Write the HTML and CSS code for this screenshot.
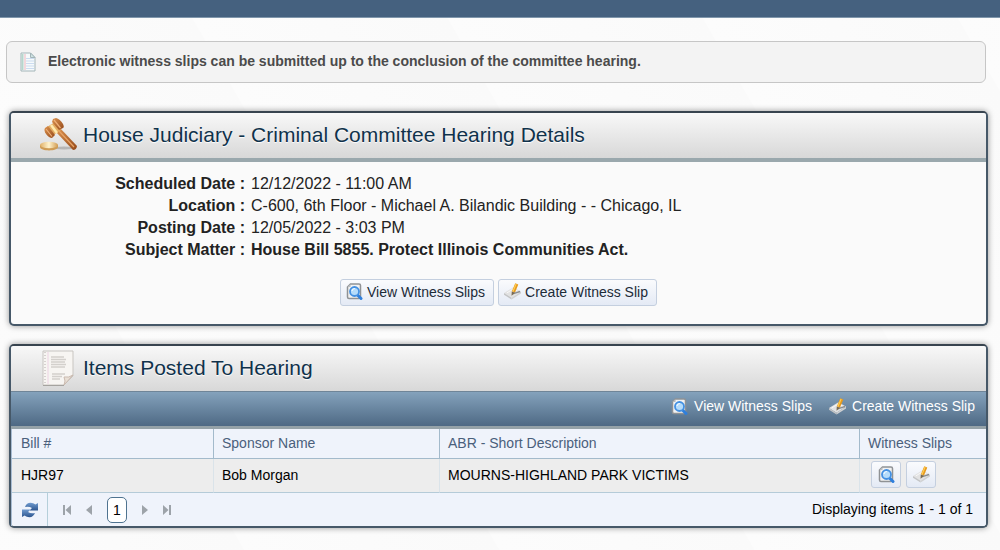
FILE: index.html
```html
<!DOCTYPE html>
<html lang="en">
  <head>
    <meta charset="UTF-8" />
    <meta name="viewport" content="width=device-width, initial-scale=1.0" />
    <title>Hearing Details</title>
    <link rel="stylesheet" href="styles.css">
  </head>
  <body>
    <!-- Shared icons -->
    <svg class="sprite" aria-hidden="true">
      <defs>
        <linearGradient id="wood" x1="0" y1="0" x2="1" y2="1">
          <stop offset="0" stop-color="#dd9450" />
          <stop offset="1" stop-color="#94491a" />
        </linearGradient>
        <linearGradient id="gold" x1="0" y1="0" x2="1" y2="0">
          <stop offset="0" stop-color="#e0b068" />
          <stop offset="0.5" stop-color="#fff3cc" />
          <stop offset="1" stop-color="#d09a50" />
        </linearGradient>
        <linearGradient id="arrow" x1="0" y1="0" x2="0" y2="1">
          <stop offset="0" stop-color="#6f9ace" />
          <stop offset="1" stop-color="#2c558f" />
        </linearGradient>
      </defs>
      <symbol id="icon-view" viewBox="0 0 16 17">
        <path d="M4 1h8.500q1.500 0 1.500 1.500V14q0 1.500-1.500 1.500H2.500Q1 15.500 1 14V4z" fill="#f2f2f2" stroke="#8f9295" stroke-width="1.500" />
        <path d="M1 4l3-3v3z" fill="#b9bcbf" />
        <path d="M11 12l3.500 3.500" stroke="#2f7fdc" stroke-width="3" stroke-linecap="round" />
        <circle cx="8" cy="8.500" r="4.500" fill="#b5dcfb" stroke="#4390e2" stroke-width="1.800" />
        <path d="M5.500 8q.5-2.500 3-2.500" fill="none" stroke="#eef8ff" stroke-width="1.200" />
      </symbol>
      <symbol id="icon-create" viewBox="0 0 18 17">
        <path d="M0 10L10 4l8 4.500L8 15z" fill="#e2e2e2" />
        <path d="M0 10l8 5v2l-8-5z" fill="#c3c4c5" />
        <path d="M8 15l10-6.500v2L8 17z" fill="#d0d1d2" />
        <path d="M3 10l7-4.300L15 8.500" fill="none" stroke="#f8f8f8" stroke-width="1" />
        <path d="M9 11l8-2.500" stroke="#8b8d8f" stroke-width="1.500" />
        <path d="M13.500.5L10 9" stroke="#e89a1c" stroke-width="3.500" />
        <path d="M12.800.5L9.500 8.500" stroke="#ffcf55" stroke-width="1.200" />
        <path d="M8.200 8.500l3.500 1.300L8 13z" fill="#7a6a50" />
      </symbol>
    </svg>

    <header class="topbar"></header>

    <main>
      <div class="notice">
        <svg class="notice-icon" viewBox="0 0 16 20" aria-hidden="true">
          <path d="M1 1h9.500L15 5.500V19H1z" fill="#f6fafb" stroke="#a3b5b8" />
          <path d="M6 6.500h8M6 9h8M6 11.500h8M6 14h8M6 16.500h8" stroke="#cbdcf0" />
          <path d="M2.500 2v16" stroke="#b7d6cc" stroke-width="2" />
          <path d="M5 2v16" stroke="#f0b6bd" />
          <path d="M10.500 1v4.500H15z" fill="#cfe3e3" stroke="#a3b5b8" />
        </svg>
        <p>Electronic witness slips can be submitted up to the conclusion of the committee hearing.</p>
      </div>

      <section class="panel">
        <div class="panel-header ruled">
          <svg class="panel-icon" viewBox="0 -2 38 38" aria-hidden="true">
            <ellipse cx="25" cy="30" rx="12" ry="1.500" fill="#777" opacity="0.4" />
            <path d="M1 27v2c0 4.500 18 4.500 18 0v-2z" fill="#cf9c55" />
            <ellipse cx="10" cy="27" rx="9" ry="3.300" fill="url(#gold)" />
            <path d="M17 14l4-4 17 18q-.5 4-4 4z" fill="url(#wood)" />
            <path d="M20 13l15 16" stroke="#e8a366" stroke-width="1.200" />
            <path d="M8 9l8-5 6 8-9 6z" fill="#e3ac62" />
            <path d="M12 7l6 8" stroke="#ffe9ac" stroke-width="2.500" />
            <path d="M6 10l3-2 7 9-3 3q-3 0-6-4-2.500-4-1-6z" fill="url(#wood)" />
            <path d="M14 1l3-1q4 1 7 6 1.500 3 0 4l-4 2L13 4z" fill="url(#wood)" />
            <path d="M7 11l6 7.500M15 2l6.500 8" stroke="#efb078" stroke-width="1.200" />
          </svg>
          <h2>House Judiciary - Criminal Committee Hearing Details</h2>
        </div>
        <dl class="details">
          <dt>Scheduled Date :</dt>
          <dd>12/12/2022 - 11:00 AM</dd>
          <dt>Location :</dt>
          <dd>C-600, 6th Floor - Michael A. Bilandic Building - - Chicago, IL</dd>
          <dt>Posting Date :</dt>
          <dd>12/05/2022 - 3:03 PM</dd>
          <dt>Subject Matter :</dt>
          <dd><strong>House Bill 5855. Protect Illinois Communities Act.</strong></dd>
        </dl>
        <div class="actions">
          <button type="button" class="button">
            <svg class="icon" aria-hidden="true"><use href="#icon-view" /></svg>View Witness Slips
          </button>
          <button type="button" class="button">
            <svg class="icon" aria-hidden="true"><use href="#icon-create" /></svg>Create Witness Slip
          </button>
        </div>
      </section>

      <section class="panel">
        <div class="panel-header">
          <svg class="panel-icon" viewBox="0 0 38 38" aria-hidden="true">
            <path d="M4 2h30v25l-9 9H4z" fill="#f7f5f2" stroke="#c8c5c1" />
            <path d="M6 3v32" stroke="#d6d1cf" stroke-width="2" stroke-dasharray="1 2" />
            <path d="M9 3v32" stroke="#ecd3e3" />
            <path d="M12 8h13M12 10.500h15M12 13h14M12 15.500h15M12 18h14M13 25h13M13 27.500h10M13 30h8" stroke="#d3d0cc" stroke-width="1.500" />
            <path d="M25 36q2-4 0-8 5 1 9-2z" fill="#e9dfd5" stroke="#c9b9ae" />
            <path d="M4 36.500h21" stroke="#a5a39f" />
          </svg>
          <h2>Items Posted To Hearing</h2>
        </div>
        <div class="toolbar">
          <a href="#"><svg class="icon" aria-hidden="true"><use href="#icon-view" /></svg>View Witness Slips</a>
          <a href="#"><svg class="icon" aria-hidden="true"><use href="#icon-create" /></svg>Create Witness Slip</a>
        </div>
        <div class="grid">
          <table>
            <colgroup>
              <col class="col-bill">
              <col class="col-sponsor">
              <col>
              <col class="col-slips">
            </colgroup>
            <thead>
              <tr>
                <th>Bill #</th>
                <th>Sponsor Name</th>
                <th>ABR - Short Description</th>
                <th>Witness Slips</th>
              </tr>
            </thead>
            <tbody>
              <tr>
                <td>HJR97</td>
                <td>Bob Morgan</td>
                <td>MOURNS-HIGHLAND PARK VICTIMS</td>
                <td>
                  <div class="row-buttons">
                    <button type="button" class="button small" aria-label="View Witness Slips">
                      <svg class="icon" aria-hidden="true"><use href="#icon-view" /></svg>
                    </button>
                    <button type="button" class="button small" aria-label="Create Witness Slip">
                      <svg class="icon" aria-hidden="true"><use href="#icon-create" /></svg>
                    </button>
                  </div>
                </td>
              </tr>
            </tbody>
          </table>
          <div class="pager">
            <button type="button" class="refresh" aria-label="Refresh">
              <svg viewBox="0 0 16 16" aria-hidden="true">
                <path d="M3 5Q5 0 10 1q2 .3 3.300 1.500L16 1v7.500H7.500L10 6Q7 4 3 5z" fill="url(#arrow)" />
                <path d="M13 11q-2 5-7 4-2-.3-3.300-1.500L0 15V7.500h8.500L6 10q3 2 7 1z" fill="url(#arrow)" />
              </svg>
            </button>
            <nav class="pages">
              <button type="button" aria-label="First page">
                <svg viewBox="0 0 8 10"><path d="M0 0h2v10H0zM8 0v10L2.500 5z" /></svg>
              </button>
              <button type="button" aria-label="Previous page">
                <svg viewBox="0 0 8 10"><path d="M7 0v10L1 5z" /></svg>
              </button>
              <a href="#" class="current">1</a>
              <button type="button" aria-label="Next page">
                <svg viewBox="0 0 8 10"><path d="M1 0v10l6-5z" /></svg>
              </button>
              <button type="button" aria-label="Last page">
                <svg viewBox="0 0 8 10"><path d="M6 0h2v10H6zM0 0v10l5.500-5z" /></svg>
              </button>
            </nav>
            <span class="status">Displaying items 1 - 1 of 1</span>
          </div>
        </div>
      </section>
    </main>
  </body>
</html>
```
FILE: styles.css
```css
* {
  box-sizing: border-box;
}
body {
  margin: 0;
  font-family: "Liberation Sans", Arial, sans-serif;
  font-size: 14px;
  color: #000;
  background: #fbfbfb repeating-linear-gradient(60deg, #fcfcfc 0, #fafafa 220px, #fcfcfc 221px);
}
h2,
p,
dl,
dd {
  margin: 0;
}
button {
  font-family: inherit;
  cursor: pointer;
}
.sprite {
  position: absolute;
  width: 0;
  height: 0;
}
.topbar {
  height: 18px;
  background-color: #45617f;
  border-bottom: 1px solid #8097ac;
}
main {
  padding: 23px 12px 22px 9px;
}
.notice {
  display: flex;
  align-items: center;
  gap: 12px;
  min-height: 42px;
  margin: 0 2px 28px -3px;
  padding: 0 13px;
  background-color: #f3f3f3;
  border: 1px solid #c6c6c6;
  border-radius: 6px;
  color: #4b4b4b;
  font-weight: bold;
}
.notice p {
  padding-bottom: 2px;
}
.notice-icon {
  width: 16px;
  height: 20px;
}
.panel {
  margin-bottom: 18px;
  background-color: #fafafa;
  border: 2px solid #465868;
  border-top-color: #38444f;
  border-radius: 5px;
  box-shadow: 0 0 6px rgba(0, 0, 0, 0.4);
}
.panel-header {
  display: flex;
  align-items: center;
  gap: 6px;
  height: 45px;
  padding: 0 0 2px 28px;
  background: linear-gradient(#f8f8f8, #d8d8d8);
  border-radius: 3px 3px 0 0;
}
.ruled {
  height: 49px;
  border-bottom: 4px solid #9aa8ad;
}
.panel-icon {
  width: 38px;
  height: 38px;
}
h2 {
  color: #10324b;
  font-size: 21px;
  font-weight: normal;
  text-shadow: 0 1px 1px #fff;
}
.details {
  display: grid;
  grid-template-columns: 24% 1fr;
  column-gap: 6px;
  padding-top: 11px;
  color: #222;
  font-size: 16px;
  line-height: 22px;
}
dt {
  font-weight: bold;
  text-align: right;
}
.actions {
  display: flex;
  justify-content: center;
  gap: 4px;
  padding: 18px 0;
}
.button {
  display: flex;
  align-items: center;
  gap: 4px;
  height: 27px;
  padding: 0 8px 2px 5px;
  background: linear-gradient(#fafbfd, #e4eaf5);
  border: 1px solid #c4cfdf;
  border-radius: 3px;
  color: #1c2b38;
  font-size: 14px;
}
.icon {
  width: 17px;
  height: 17px;
}
.toolbar {
  display: flex;
  justify-content: flex-end;
  gap: 17px;
  height: 38px;
  padding: 5px 11px 0;
  background: linear-gradient(#84a2bc, #4e6984);
  border-top: 1px solid #6f8598;
  border-bottom: 3px solid #95a2a8;
}
.toolbar a {
  display: flex;
  align-items: center;
  gap: 6px;
  height: 18px;
  color: #fff;
  text-decoration: none;
}
.grid {
  border-left: 1px solid #a9bdd3;
}
table {
  width: 100%;
  table-layout: fixed;
  border-collapse: separate;
  border-spacing: 0;
}
.col-bill {
  width: 201px;
}
.col-sponsor {
  width: 226px;
}
.col-slips {
  width: 127px;
}
th,
td {
  padding: 0 8px 2px;
  text-align: left;
}
th:first-child,
td:first-child {
  padding-left: 9px;
}
th {
  height: 30px;
  background-color: #eff3fb;
  border-bottom: 1px solid #a3bacb;
  color: #4a607b;
  font-weight: normal;
}
td {
  height: 34px;
  background-color: #ededed;
  border-bottom: 1px solid #b5cbd8;
}
th + th {
  border-left: 1px solid #a3bacb;
}
td + td {
  border-left: 1px solid #dae3e9;
}
.row-buttons {
  display: flex;
  gap: 5px;
  padding-left: 3px;
}
.small {
  justify-content: center;
  width: 30px;
  padding: 0;
}
.pager {
  display: flex;
  align-items: center;
  height: 33px;
  padding-right: 13px;
  background-color: #eff3fb;
  border-radius: 0 0 3px 3px;
}
.pager button {
  display: flex;
  padding: 0;
  background: none;
  border: none;
}
.pager .refresh {
  align-items: center;
  justify-content: center;
  width: 36px;
  height: 33px;
  border-right: 1px solid #b5cfda;
}
.refresh svg {
  width: 16px;
  height: 16px;
}
.pages {
  display: flex;
  align-items: center;
  gap: 14px;
  padding-left: 15px;
}
.pages svg {
  width: 8px;
  height: 10px;
  fill: #9da3a9;
}
.current {
  width: 20px;
  height: 26px;
  background-color: #fff;
  border: 1px solid #4f7390;
  border-radius: 5px;
  color: #000;
  line-height: 24px;
  text-align: center;
  text-decoration: none;
}
.status {
  margin-left: auto;
  padding-bottom: 2px;
}
```
